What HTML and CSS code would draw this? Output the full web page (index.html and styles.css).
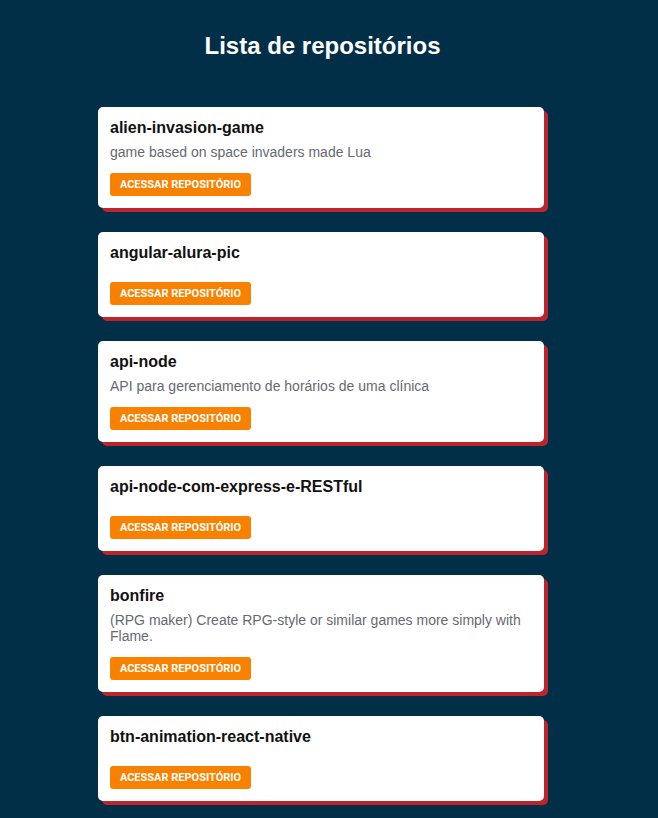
FILE: index.html
```html
<!DOCTYPE html>
<html lang="pt-BR">
<head>
<meta charset="utf-8">
<title>Lista de repositórios</title>
<link rel="stylesheet" href="styles.css">
</head>
<body>
<main class="page">
  <h1 class="page-title">Lista de repositórios</h1>
  <ul class="repo-list">
    <li class="repo-card">
      <strong class="repo-name">alien-invasion-game</strong>
      <p class="repo-desc">game based on space invaders made Lua</p>
      <a class="repo-btn" href="#">Acessar repositório</a>
    </li>
    <li class="repo-card">
      <strong class="repo-name">angular-alura-pic</strong>
      <p class="repo-desc"></p>
      <a class="repo-btn" href="#">Acessar repositório</a>
    </li>
    <li class="repo-card">
      <strong class="repo-name">api-node</strong>
      <p class="repo-desc">API para gerenciamento de horários de uma clínica</p>
      <a class="repo-btn" href="#">Acessar repositório</a>
    </li>
    <li class="repo-card">
      <strong class="repo-name">api-node-com-express-e-RESTful</strong>
      <p class="repo-desc"></p>
      <a class="repo-btn" href="#">Acessar repositório</a>
    </li>
    <li class="repo-card">
      <strong class="repo-name">bonfire</strong>
      <p class="repo-desc">(RPG maker) Create RPG-style or similar games more simply with Flame.</p>
      <a class="repo-btn" href="#">Acessar repositório</a>
    </li>
    <li class="repo-card">
      <strong class="repo-name">btn-animation-react-native</strong>
      <p class="repo-desc"></p>
      <a class="repo-btn" href="#">Acessar repositório</a>
    </li>
  </ul>
</main>
</body>
</html>
```
FILE: styles.css
```css
* { box-sizing: border-box; }

html, body {
  margin: 0;
  padding: 0;
  background: #012f48;
}

body {
  font-family: "Liberation Sans", Arial, sans-serif;
  padding-right: 16px;
}

.page {
  width: 446px;
  margin: 0 auto;
  padding: 32px 0 12px;
}

.page-title {
  margin: 0 0 47px;
  padding-left: 3px;
  font-size: 24px;
  line-height: 28px;
  font-weight: 700;
  color: #ffffff;
  text-align: center;
}

.repo-list {
  list-style: none;
  margin: 0;
  padding: 0;
  display: flex;
  flex-direction: column;
  gap: 24px;
}

.repo-card {
  display: flex;
  flex-direction: column;
  align-items: flex-start;
  background: #ffffff;
  border-radius: 5px;
  padding: 12px;
  box-shadow: 4px 4px 0 #c0242b;
}

.repo-name {
  font-size: 16px;
  line-height: 18px;
  font-weight: 700;
  color: #111111;
}

.repo-desc {
  margin: 7px 0 13px;
  font-size: 14px;
  line-height: 16px;
  color: #666a70;
}

.repo-btn {
  display: inline-flex;
  align-items: center;
  justify-content: center;
  width: 141px;
  height: 23px;
  background: #f88100;
  border-radius: 3px;
  color: #ffffff;
  font-family: Roboto, "Liberation Sans", sans-serif;
  font-size: 11px;
  font-weight: 700;
  text-transform: uppercase;
  text-decoration: none;
}
```
